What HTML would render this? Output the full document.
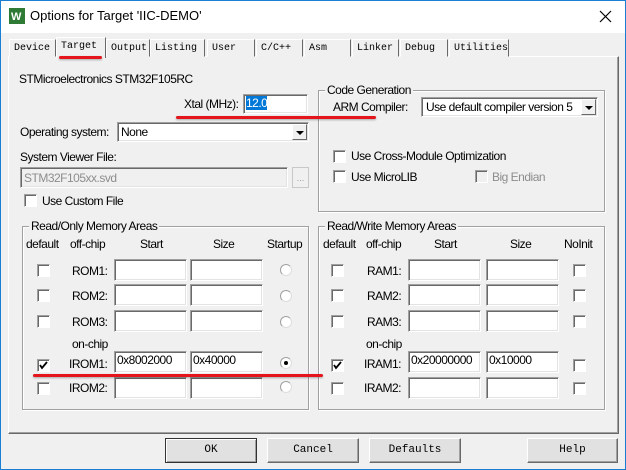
<!DOCTYPE html>
<html><head><style>
*{box-sizing:border-box;margin:0;padding:0}
body{width:626px;height:470px;overflow:hidden;background:#f0f0f0;font-family:"Liberation Sans",sans-serif;font-size:12px;color:#000;position:relative}
.a{position:absolute;white-space:nowrap}
.win{position:absolute;left:0;top:0;width:626px;height:470px;border:1px solid #1a7fd4}
.title{position:absolute;left:1px;top:1px;width:624px;height:32px;background:#fff}
.t{font-size:12px;letter-spacing:-0.5px}
.in{position:absolute;background:#fff;border:1px solid;border-color:#a0a0a0 #fff #fff #a0a0a0;box-shadow:inset 1px 1px #696969,inset -1px -1px #e3e3e3;padding:2px 3px;font-size:12px;letter-spacing:-0.5px;white-space:nowrap;overflow:hidden}
.grp{position:absolute;border:1px solid #a0a0a0;box-shadow:1px 1px #fff,inset 1px 1px #fff}
.gl{position:absolute;background:#f0f0f0;padding:0 2px;top:-8px;left:6px;font-size:12px;letter-spacing:-0.5px;white-space:nowrap}
.cb{position:absolute;width:13px;height:13px;background:#fff;border:1px solid;border-color:#a0a0a0 #fff #fff #a0a0a0;box-shadow:inset 1px 1px #696969}
.rd{position:absolute;width:12px;height:12px;border-radius:50%;background:#fff;border:1px solid #a0a0a0;border-right-color:#ddd;border-bottom-color:#ddd}
.tab{position:absolute;top:39px;height:18px;border:1px solid;border-color:#fff #696969 transparent #fff;font-family:"Liberation Mono",monospace;font-size:10px;padding:3px 0 0 4px;background:#f0f0f0;white-space:nowrap}
.btn{position:absolute;top:438px;height:25px;background:#e1e1e1;border:1px solid;border-color:#fff #696969 #696969 #fff;box-shadow:inset -1px -1px #a0a0a0;font-family:"Liberation Mono",monospace;font-size:11px;text-align:center;line-height:22px}
.dd{position:absolute;width:15px;top:1px;bottom:1px;right:1px;background:#f0f0f0;border:1px solid;border-color:#fff #696969 #696969 #fff}
.dd:after{content:"";position:absolute;left:3px;top:6px;border:4px solid transparent;border-top:4px solid #000;border-bottom:0}
.red{position:absolute;height:3px;background:#e5161b;border-radius:2px;box-shadow:0 1px 2px rgba(0,0,0,.3)}
</style></head><body>
<div class="win"></div>
<div class="title"></div>
<svg class="a" style="left:9px;top:8px" width="16" height="16"><rect width="16" height="16" fill="#2f7a34"/><text x="2" y="12" font-size="11" font-weight="bold" fill="#fff" font-family="Liberation Sans">W</text></svg>
<div class="a" style="left:30px;top:8px;font-size:13px">Options for Target 'IIC-DEMO'</div>
<svg class="a" style="left:599px;top:10px" width="13" height="13"><path d="M1 1L12 12M12 1L1 12" stroke="#000" stroke-width="1.2"/></svg>

<div class="a" style="left:8px;top:56px;width:611px;height:378px;border:1px solid;border-color:#fff #696969 #696969 #fff;box-shadow:inset -1px -1px #a0a0a0"></div>
<div class="tab" style="left:9px;width:47px">Device</div>
<div class="tab" style="left:106px;width:44px">Output</div>
<div class="tab" style="left:150px;width:55px">Listing</div>
<div class="tab" style="left:207px;width:48px">User</div>
<div class="tab" style="left:256px;width:47px">C/C++</div>
<div class="tab" style="left:304px;width:47px">Asm</div>
<div class="tab" style="left:352px;width:47px">Linker</div>
<div class="tab" style="left:400px;width:48px">Debug</div>
<div class="tab" style="left:449px;width:60px">Utilities</div>
<div class="tab" style="left:56px;top:37px;width:50px;height:21px;border-bottom:none;z-index:2;padding-top:3px">Target</div>
<div class="red" style="left:59px;top:56px;width:43px;height:3px;z-index:3"></div>

<div class="a t" style="left:19px;top:72px">STMicroelectronics STM32F105RC</div>
<div class="a t" style="left:184px;top:97px">Xtal (MHz):</div>
<div class="in" style="left:243px;top:94px;width:65px;height:20px;padding:1px 2px"><span style="background:#0078d7;color:#fff">12.0</span></div>

<div class="grp" style="left:318px;top:90px;width:287px;height:122px"><div class="gl">Code Generation</div></div>
<div class="a t" style="left:333px;top:100px">ARM Compiler:</div>
<div class="in" style="left:421px;top:97px;width:177px;height:20px;padding:2px 4px">Use default compiler version 5<div class="dd"></div></div>
<div class="red" style="left:176px;top:116px;width:200px"></div>

<div class="a t" style="left:20px;top:125px">Operating system:</div>
<div class="in" style="left:117px;top:122px;width:192px;height:20px;padding:2px 3px">None<div class="dd"></div></div>
<div class="a t" style="left:20px;top:150px">System Viewer File:</div>
<div class="in" style="left:20px;top:167px;width:268px;height:21px;background:#f0f0f0;color:#8d8d8d;padding:3px 3px">STM32F105xx.svd</div>
<div class="a" style="left:292px;top:167px;width:17px;height:21px;background:#f0f0f0;border:1px solid #c8c8c8;color:#999;font-size:9px;text-align:center;line-height:20px">...</div>
<div class="cb" style="left:24px;top:194px"></div>
<div class="a t" style="left:42px;top:194px">Use Custom File</div>

<div class="cb" style="left:333px;top:150px"></div><div class="a t" style="left:351px;top:149px">Use Cross-Module Optimization</div>
<div class="cb" style="left:333px;top:170px"></div><div class="a t" style="left:351px;top:170px">Use MicroLIB</div>
<div class="cb" style="left:475px;top:170px;background:#f0f0f0"></div><div class="a t" style="left:492px;top:170px;color:#8d8d8d">Big Endian</div>

<div class="grp" style="left:22px;top:226px;width:287px;height:184px"><div class="gl">Read/Only Memory Areas</div></div>
<div class="a t" style="left:26px;top:237px">default</div>
<div class="a t" style="left:70px;top:237px">off-chip</div>
<div class="a t" style="left:140px;top:237px">Start</div>
<div class="a t" style="left:213px;top:237px">Size</div>
<div class="a t" style="left:267px;top:237px">Startup</div>

<div class="a t" style="left:72px;top:264px">ROM1:</div>
<div class="a t" style="left:72px;top:289px">ROM2:</div>
<div class="a t" style="left:72px;top:315px">ROM3:</div>
<div class="a t" style="left:72px;top:337px">on-chip</div>
<div class="a t" style="left:69px;top:357px">IROM1:</div>
<div class="a t" style="left:69px;top:381px">IROM2:</div>
<div class="cb" style="left:37px;top:264px"></div>
<div class="cb" style="left:37px;top:289px"></div>
<div class="cb" style="left:37px;top:315px"></div>
<div class="cb" style="left:37px;top:359px"><svg width="11" height="11" style="position:absolute;left:0;top:0"><path d="M2 5L4 8L9 2" stroke="#000" stroke-width="1.8" fill="none"/></svg></div>
<div class="cb" style="left:37px;top:382px"></div>
<div class="in" style="left:114px;top:259px;width:73px;height:22px"></div>
<div class="in" style="left:190px;top:259px;width:73px;height:22px"></div>
<div class="in" style="left:114px;top:284px;width:73px;height:22px"></div>
<div class="in" style="left:190px;top:284px;width:73px;height:22px"></div>
<div class="in" style="left:114px;top:310px;width:73px;height:22px"></div>
<div class="in" style="left:190px;top:310px;width:73px;height:22px"></div>
<div class="in" style="left:114px;top:351px;width:73px;height:22px;padding:1px 2px">0x8002000</div>
<div class="in" style="left:190px;top:351px;width:73px;height:22px;padding:1px 2px">0x40000</div>
<div class="in" style="left:114px;top:377px;width:73px;height:22px"></div>
<div class="in" style="left:190px;top:377px;width:73px;height:22px"></div>
<div class="rd" style="left:280px;top:264px"></div>
<div class="rd" style="left:280px;top:290px"></div>
<div class="rd" style="left:280px;top:316px"></div>
<div class="rd" style="left:280px;top:357px"><div style="position:absolute;left:3px;top:3px;width:4px;height:4px;border-radius:50%;background:#000"></div></div>
<div class="rd" style="left:280px;top:381px"></div>

<div class="grp" style="left:318px;top:226px;width:287px;height:184px"><div class="gl">Read/Write Memory Areas</div></div>
<div class="a t" style="left:323px;top:237px">default</div>
<div class="a t" style="left:366px;top:237px">off-chip</div>
<div class="a t" style="left:434px;top:237px">Start</div>
<div class="a t" style="left:510px;top:237px">Size</div>
<div class="a t" style="left:564px;top:237px">NoInit</div>
<div class="a t" style="left:367px;top:264px">RAM1:</div>
<div class="a t" style="left:367px;top:289px">RAM2:</div>
<div class="a t" style="left:367px;top:315px">RAM3:</div>
<div class="a t" style="left:366px;top:337px">on-chip</div>
<div class="a t" style="left:364px;top:357px">IRAM1:</div>
<div class="a t" style="left:364px;top:381px">IRAM2:</div>
<div class="cb" style="left:331px;top:264px"></div>
<div class="cb" style="left:331px;top:289px"></div>
<div class="cb" style="left:331px;top:315px"></div>
<div class="cb" style="left:331px;top:359px"><svg width="11" height="11" style="position:absolute;left:0;top:0"><path d="M2 5L4 8L9 2" stroke="#000" stroke-width="1.8" fill="none"/></svg></div>
<div class="cb" style="left:331px;top:382px"></div>
<div class="cb" style="left:573px;top:264px"></div>
<div class="cb" style="left:573px;top:289px"></div>
<div class="cb" style="left:573px;top:315px"></div>
<div class="cb" style="left:573px;top:359px"></div>
<div class="cb" style="left:573px;top:382px"></div>
<div class="in" style="left:408px;top:259px;width:73px;height:22px"></div>
<div class="in" style="left:486px;top:259px;width:73px;height:22px"></div>
<div class="in" style="left:408px;top:284px;width:73px;height:22px"></div>
<div class="in" style="left:486px;top:284px;width:73px;height:22px"></div>
<div class="in" style="left:408px;top:310px;width:73px;height:22px"></div>
<div class="in" style="left:486px;top:310px;width:73px;height:22px"></div>
<div class="in" style="left:408px;top:351px;width:73px;height:22px;padding:1px 2px">0x20000000</div>
<div class="in" style="left:486px;top:351px;width:73px;height:22px;padding:1px 2px">0x10000</div>
<div class="in" style="left:408px;top:377px;width:73px;height:22px"></div>
<div class="in" style="left:486px;top:377px;width:73px;height:22px"></div>

<div class="red" style="left:33px;top:374px;width:290px"></div>

<div class="btn" style="left:165px;width:92px;border:1px solid #333;box-shadow:inset 1px 1px #fff,inset -1px -1px #a0a0a0">OK</div>
<div class="btn" style="left:267px;width:92px">Cancel</div>
<div class="btn" style="left:369px;width:92px">Defaults</div>
<div class="btn" style="left:527px;width:91px">Help</div>
</body></html>
